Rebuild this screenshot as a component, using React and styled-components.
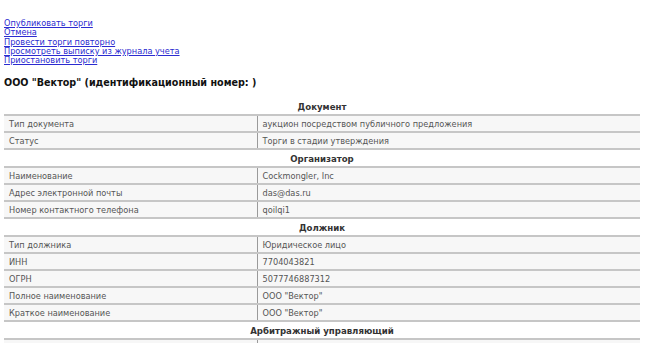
import React from 'react';
import styled, {createGlobalStyle} from 'styled-components';

const sections = [
    {
        title: 'Документ',
        rows: [
            ['Тип документа', 'аукцион посредством публичного предложения'],
            ['Статус', 'Торги в стадии утверждения']
        ]
    },
    {
        title: 'Организатор',
        rows: [
            ['Наименование', 'Cockmongler, Inc'],
            ['Адрес электронной почты', 'das@das.ru'],
            ['Номер контактного телефона', 'qoilqi1']
        ]
    },
    {
        title: 'Должник',
        rows: [
            ['Тип должника', 'Юридическое лицо'],
            ['ИНН', '7704043821'],
            ['ОГРН', '5077746887312'],
            ['Полное наименование', 'ООО "Вектор"'],
            ['Краткое наименование', 'ООО "Вектор"']
        ]
    },
    {
        title: 'Арбитражный управляющий',
        rows: [
            ['', '']
        ]
    }
];

const actions = [
    'Опубликовать торги',
    'Отмена',
    'Провести торги повторно',
    'Просмотреть выписку из журнала учета',
    'Приостановить торги'
];

const App = () => (
    <>
        <GlobalStyle/>
        <StyledPage>
            <StyledActions>
                {actions.map(action => (
                    <StyledAction key={action} href="#">{action}</StyledAction>
                ))}
            </StyledActions>
            <StyledTitle>ООО "Вектор" (идентификационный номер: )</StyledTitle>
            <StyledTable>
                <colgroup>
                    <StyledCol $width={253}/>
                    <col/>
                </colgroup>
                {sections.map(section => (
                    <tbody key={section.title}>
                        <tr>
                            <StyledSectionCell colSpan={2}>{section.title}</StyledSectionCell>
                        </tr>
                        {section.rows.map((row, index) => (
                            <StyledRow key={index}>
                                <StyledLabelCell>{row[0]}</StyledLabelCell>
                                <StyledValueCell>{row[1]}</StyledValueCell>
                            </StyledRow>
                        ))}
                    </tbody>
                ))}
            </StyledTable>
        </StyledPage>
    </>
);

const GlobalStyle = createGlobalStyle`
    body {
        margin: 0;
        background: #fff;
        font-family: "DejaVu Sans", Verdana, sans-serif;
    }
`;

const StyledPage = styled.div`
    padding: 19px 6px 0 4px;
`;

const StyledActions = styled.div`
    display: flex;
    flex-direction: column;
    align-items: flex-start;
`;

const StyledAction = styled.a`
    font-size: 8.2px;
    line-height: 9.3px;
    color: #2b2bd0;
    text-decoration: underline;
`;

const StyledTitle = styled.h1`
    margin: 11px 0 9px;
    font-size: 9.6px;
    line-height: 13px;
    font-weight: bold;
    color: #111;
`;

const StyledTable = styled.table`
    width: 636px;
    border-collapse: collapse;
    table-layout: fixed;
`;

const StyledCol = styled.col`
    width: ${({$width}) => $width}px;
`;

const StyledSectionCell = styled.td`
    height: 15px;
    padding: 1px 0 0;
    text-align: center;
    font-size: 8.6px;
    font-weight: bold;
    color: #333;
    border-bottom: 2px solid #c6c6c6;
`;

const StyledRow = styled.tr`
    background: #f7f7f7;
`;

const StyledLabelCell = styled.td`
    height: 15px;
    padding: 0 0 0 5px;
    font-size: 8.2px;
    color: #555;
    border-bottom: 2px solid #c6c6c6;
    border-right: 1px solid #9a9a9a;
`;

const StyledValueCell = styled.td`
    height: 15px;
    padding: 0 0 0 5px;
    font-size: 8.2px;
    color: #555;
    border-bottom: 2px solid #c6c6c6;
`;

export default App;
